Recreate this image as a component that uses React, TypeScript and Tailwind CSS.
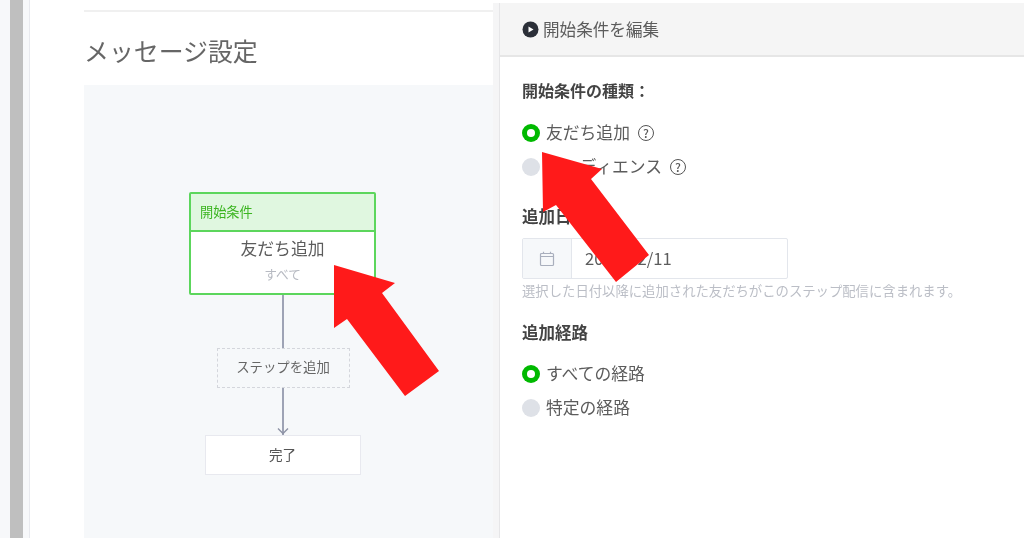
const FONT = "font-['Noto_Sans_CJK_JP','Noto_Sans',sans-serif]";

function Radio({ checked, label, help }: { checked?: boolean; label: string; help?: boolean }) {
  return (
    <div className="flex items-center h-[18px]">
      {checked ? (
        <span className="w-[18px] h-[18px] rounded-full bg-[#00b900] flex items-center justify-center">
          <span className="w-[8px] h-[8px] rounded-full bg-white" />
        </span>
      ) : (
        <span className="w-[18px] h-[18px] rounded-full bg-[#dee1e7]" />
      )}
      <span className="ml-[6px] text-[16.8px] text-[#5c5c5c]">{label}</span>
      {help && (
        <span className="ml-[8px] w-[16px] h-[16px] rounded-full border border-[#555] text-[#555] text-[12px] font-medium leading-none flex items-center justify-center">
          ?
        </span>
      )}
    </div>
  );
}

function Line({ height }: { height: string }) {
  return <div className={`w-[2px] bg-[#9ea3b5] ${height}`} />;
}

export default function App() {
  return (
    <div className={`relative flex w-[1024px] h-[538px] overflow-hidden bg-white blur-[0.4px] ${FONT}`}>
      {/* browser edge */}
      <div className="w-[10px] bg-[#f7f8fa]" />
      <div className="w-[13px] bg-[#bfbfbf]" />
      <div className="w-[7px] bg-[#f7f8fa] border-r border-[#e8e9ee]" />

      <div className="w-[463px] pl-[54px] flex flex-col">
        <div className="mt-[10px] h-[2px] bg-[#f0f0f0]" />
        <h1 className="h-[73px] flex items-center text-[24.9px] font-normal text-[#666] pt-[5px]">
          メッセージ設定
        </h1>
        <div className="flex-1 bg-[#f6f8fa] pl-[105px] pt-[107px]">
          <div className="w-[187px] flex flex-col items-center">
            <div className="w-full h-[103px] bg-white border-2 border-[#5cd65c] rounded-[2px] flex flex-col">
              <div className="h-[38px] bg-[#e0f7e0] border-b-2 border-[#5cd65c] pl-[9px] flex items-center text-[13.2px] text-[#3cb521]">
                開始条件
              </div>
              <div className="flex-1 flex flex-col items-center pt-[4px]">
                <span className="text-[16.8px] leading-[24px] text-[#5c5c5c]">友だち追加</span>
                <span className="text-[12.7px] leading-[20px] mt-[4px] text-[#b7bac2]">すべて</span>
              </div>
            </div>
            <Line height="h-[53px]" />
            <div className="ml-[1px] w-[133px] h-[40px] border border-dashed border-[#d4d6dc] flex items-center justify-center text-[13.4px] text-[#666] pb-[3px]">
              ステップを追加
            </div>
            <div className="relative flex flex-col items-center">
              <Line height="h-[47px]" />
              <svg className="absolute bottom-0 w-[12px] h-[8px]" viewBox="0 0 12 8" fill="none">
                <path d="M1 1.5 L6 6.5 L11 1.5" stroke="#8e93a6" strokeWidth="1.4" />
              </svg>
            </div>
            <div className="w-[156px] h-[40px] bg-white border border-[#e8e9ef] flex items-center justify-center text-[13.6px] text-[#555] pb-[1px]">
              完了
            </div>
          </div>
        </div>
      </div>

      <div className="flex-1 mt-[3px] flex bg-[#f5f5f6] pl-[6px]">
        <div className="flex-1 bg-white border-l border-[#e6e6e8] flex flex-col">
          <div className="h-[54px] bg-[#f5f5f5] border-b-2 border-[#e6e6e6] pl-[22px] flex items-center text-[16.6px] text-[#5c5c5c]">
            <svg className="w-[17px] h-[17px] mr-[4px]" viewBox="0 0 17 17">
              <circle cx="8.5" cy="8.5" r="8" fill="#2b2f38" />
              <path d="M6.5 5.5 L11.5 8.5 L6.5 11.5 Z" fill="#fff" />
            </svg>
            開始条件を編集
          </div>
          <div className="pl-[22px] flex flex-col">
            <div className="mt-[21px] h-[24px] flex items-center text-[16px] font-bold text-[#444]">
              開始条件の種類：
            </div>
            <div className="mt-[22px] flex flex-col gap-[16px]">
              <Radio checked label="友だち追加" help />
              <Radio label="オーディエンス" help />
            </div>
            <div className="mt-[28px] h-[24px] flex items-center text-[16.5px] font-bold text-[#444]">
              追加日
            </div>
            <div className="mt-[10px] w-[266px] h-[41px] border border-[#e3e6ec] rounded-[2px] flex">
              <div className="w-[49px] bg-[#f6f8fa] border-r border-[#e3e6ec] flex items-center justify-center">
                <svg className="w-[16px] h-[16px]" viewBox="0 0 16 16" fill="none" stroke="#a9afbd" strokeWidth="1.2">
                  <rect x="1.5" y="2.5" width="13" height="12" rx="1" />
                  <path d="M1.5 5.5 H14.5 M4.5 0.8 V2.5 M11.5 0.8 V2.5" />
                </svg>
              </div>
              <div className="pl-[13px] flex items-center text-[16.6px] text-[#5c5c5c]">2019/12/11</div>
            </div>
            <div className="mt-[2px] h-[20px] flex items-center text-[13.35px] text-[#bbbec6] whitespace-nowrap">
              選択した日付以降に追加された友だちがこのステップ配信に含まれます。
            </div>
            <div className="mt-[19px] h-[24px] flex items-center text-[16.5px] font-bold text-[#444]">
              追加経路
            </div>
            <div className="mt-[21px] flex flex-col gap-[16px]">
              <Radio checked label="すべての経路" />
              <Radio label="特定の経路" />
            </div>
          </div>
        </div>
      </div>

      {/* red annotation arrows over the screenshot */}
      <svg className="absolute inset-0 pointer-events-none" width="1024" height="538" viewBox="0 0 1024 538">
        <polygon fill="#ff1a1a" points="334,265 395,283 382,293 439,371 405,396 347,319 334,328" />
        <polygon fill="#ff1a1a" points="542,152 602,169 591,179 649,255 616,282 556,205 543,212" />
      </svg>
    </div>
  );
}
